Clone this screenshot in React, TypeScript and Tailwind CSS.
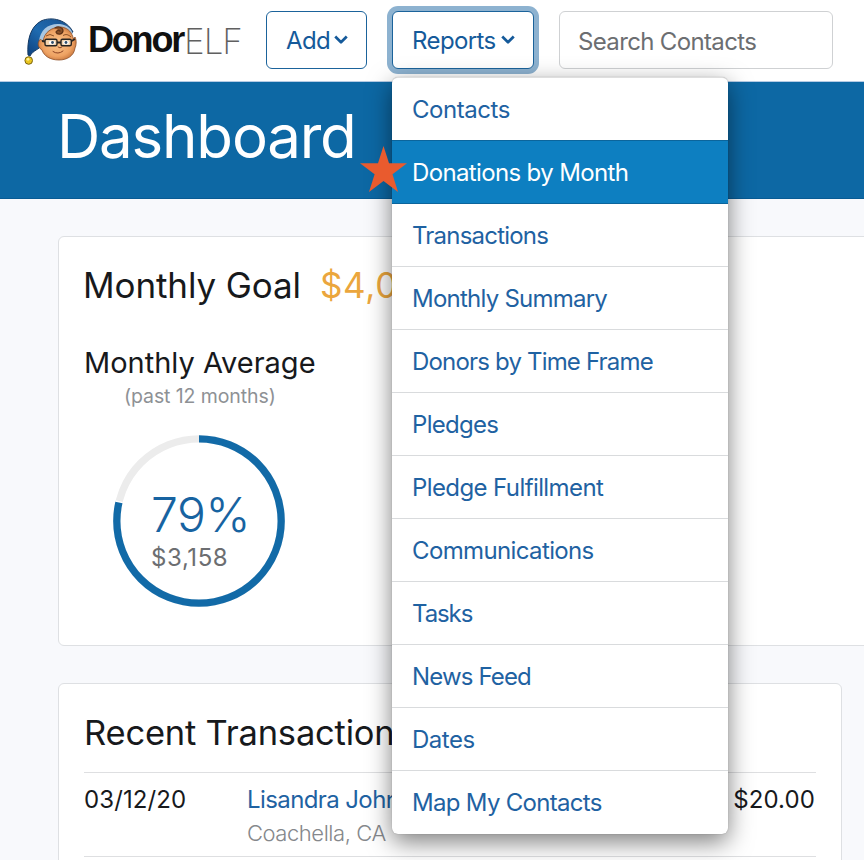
import type { ReactNode } from "react";

type MenuItem = { label: string; tracking: string; active?: boolean };

const reportItems: MenuItem[] = [
  { label: "Contacts", tracking: "tracking-[-0.45px]" },
  { label: "Donations by Month", tracking: "tracking-[-0.64px]", active: true },
  { label: "Transactions", tracking: "tracking-[-0.79px]" },
  { label: "Monthly Summary", tracking: "tracking-[-0.76px]" },
  { label: "Donors by Time Frame", tracking: "tracking-[-0.82px]" },
  { label: "Pledges", tracking: "tracking-[-0.7px]" },
  { label: "Pledge Fulfillment", tracking: "tracking-[-0.6px]" },
  { label: "Communications", tracking: "tracking-[-0.63px]" },
  { label: "Tasks", tracking: "tracking-[-1.1px]" },
  { label: "News Feed", tracking: "tracking-[-0.85px]" },
  { label: "Dates", tracking: "tracking-[-0.5px]" },
  { label: "Map My Contacts", tracking: "tracking-[-0.7px]" },
];

function ElfLogo() {
  return (
    <svg width="54" height="50" viewBox="0 0 54 50" className="shrink-0">
      <defs>
        <linearGradient id="hat" x1="0" y1="1" x2="1" y2="0">
          <stop offset="0" stopColor="#0d3f7c" />
          <stop offset="0.45" stopColor="#1f6bb0" />
          <stop offset="1" stopColor="#174f8d" />
        </linearGradient>
        <radialGradient id="face" cx="0.5" cy="0.5" r="0.6">
          <stop offset="0" stopColor="#fbc58c" />
          <stop offset="0.65" stopColor="#eea263" />
          <stop offset="1" stopColor="#b9662f" />
        </radialGradient>
      </defs>
      <path d="M4 38C3 24 6 10 17 4C28-1 43 3 49 15L37 20L19 27C15 33 9 33 6 39Z" fill="url(#hat)" stroke="#143963" strokeWidth="1" />
      <path d="M15 25C16 12 25 6 36 7C43 8 47 11 49 17L38 13L22 22Z" fill="#a9c6e0" />
      <path d="M15 24C16 21 18 23 19 25C20 15 28 10 37 10C45 11 48 16 49.5 22L51 20C53 24 52 29 51 31C50 39 43 43 35 43C26 43 20 39 18 33C15 31 13 28 15 24Z" fill="url(#face)" stroke="#8d4d25" strokeWidth="0.8" />
      <path d="M31 11C34 9 39 10 39 14C38 18 33 18 32 15C33 13 35 13 36 14" fill="#8a5128" stroke="#5d3218" strokeWidth="1.3" strokeLinecap="round" />
      <path d="M22 19Q26 16 30 19M39 18.5Q43 16 47 20" fill="none" stroke="#8a5128" strokeWidth="1" />
      <path d="M18 24L23 25M33 25.5H37M46 25L51 22" stroke="#292522" strokeWidth="1.8" />
      <rect x="21" y="22.3" width="12" height="6.4" rx="1.5" fill="#f2d3ae" stroke="#292522" strokeWidth="1.4" />
      <rect x="37" y="22.3" width="10.3" height="6.4" rx="1.5" fill="#f2d3ae" stroke="#292522" strokeWidth="1.4" />
      <ellipse cx="28" cy="25.5" rx="3" ry="2.1" fill="#fff" />
      <ellipse cx="42" cy="25.5" rx="2.8" ry="2.1" fill="#fff" />
      <circle cx="28.5" cy="25.5" r="1.4" fill="#314e69" />
      <circle cx="42" cy="25.5" r="1.4" fill="#314e69" />
      <path d="M34 30Q36 32 38 30M29 34.5Q34 38 39 34" fill="none" stroke="#8c4324" strokeWidth="1" strokeLinecap="round" />
      <circle cx="4.7" cy="43.5" r="3.8" fill="#e9c51f" stroke="#7b6410" strokeWidth="1" />
      <circle cx="4" cy="42.3" r="1.4" fill="#fff29a" />
    </svg>
  );
}

function Chevron() {
  return (
    <svg width="14" height="12" viewBox="0 0 14 12" className="-mt-[3px] shrink-0">
      <path d="M2.2 3.4L7 8.2L11.8 3.4" fill="none" stroke="currentColor" strokeWidth="2.7" strokeLinecap="square" strokeLinejoin="round" />
    </svg>
  );
}

function NavButton({ children, className }: { children: ReactNode; className: string }) {
  return (
    <button className={`flex h-[58px] items-center rounded-[6px] border border-[#1b639b] bg-white pl-[19px] pt-[2px] text-[24px] text-[#155a9a] ${className}`}>
      {children}
    </button>
  );
}

function ReportsMenu() {
  return (
    <ul className="absolute left-0 top-[66px] z-10 w-[336px] overflow-hidden rounded-[6px] border-t border-[#dedede] bg-white shadow-[0_0_1px_rgba(0,0,0,0.35),0_8px_24px_rgba(0,0,0,0.5)]">
      {reportItems.map((item) => (
        <li
          key={item.label}
          className={
            item.active
              ? "relative -mt-px flex h-16 items-center border-y border-[#0b659c] bg-[#0d7fc1] pl-5 pt-[2px] text-white"
              : "flex h-[63px] items-center border-b border-[#d9dbdd] pl-5 pt-[2px] text-[#1f62a2] last:border-b-0 last:pt-px"
          }
        >
          <a className={`whitespace-nowrap text-[24px] ${item.tracking}`}>{item.label}</a>
        </li>
      ))}
    </ul>
  );
}

function GoalRing() {
  const radius = 82.2;
  const length = 2 * Math.PI * radius;
  const filled = length * 0.785;
  return (
    <div className="relative ml-[30px] mt-[26px] h-[172px] w-[172px]">
      <svg width="172" height="172" viewBox="0 0 172 172" className="absolute inset-0">
        <g fill="none" strokeWidth="7.3" transform="rotate(-90 86 86)">
          <circle cx="86" cy="86" r={radius} stroke="#ececec" />
          <circle cx="86" cy="86" r={radius} stroke="#fff" strokeDasharray={`${filled + 1.5} ${length}`} />
          <circle cx="86" cy="86" r={radius} stroke="#126aa7" strokeDasharray={`${filled} ${length}`} />
        </g>
      </svg>
      <div className="relative pl-[38px] pt-[55px]">
        <div className="text-[48px] font-light leading-[50px] tracking-[-0.4px] text-[#1763a1]">79%</div>
        <div className="mt-[3px] text-[24px] leading-[30px] tracking-[0.6px] text-[#6c6e71]">$3,158</div>
      </div>
    </div>
  );
}

export default function App() {
  return (
    <div className="h-[860px] w-[864px] overflow-hidden bg-[#f8f9fc] font-['Inter','Liberation_Sans',sans-serif] text-[#17191c]">
      <header className="flex h-[82px] items-start border-b border-[#b5cbe4] bg-white pl-6">
        <div className="flex w-[242px] pt-[17px]">
          <ElfLogo />
          <div className="ml-[10px] mt-[2px] flex font-['Liberation_Sans',sans-serif] text-[36px] leading-[42px]">
            <span className="w-[96px] font-bold tracking-[-2.2px] text-[#101010]">Donor</span>
            <span className="pt-px font-['Inter',sans-serif] text-[35px] font-extralight tracking-[-1px] text-[#606060]">ELF</span>
          </div>
        </div>
        <NavButton className="mt-[11px] w-[101px] gap-[4px] tracking-[-0.6px]">Add<Chevron /></NavButton>
        <div className="relative ml-[25px] mt-[11px]">
          <NavButton className="w-[142px] gap-[5px] tracking-[-0.6px] shadow-[0_0_0_5px_#8db2d0]">Reports<Chevron /></NavButton>
          <ReportsMenu />
        </div>
        <input
          className="ml-[25px] mt-[11px] h-[58px] w-[274px] rounded-[6px] border border-[#cfd1d3] bg-white pl-[18px] pt-[2px] text-[24px] tracking-[-0.65px] text-[#6c6e71] placeholder:text-[#6c6e71]"
          placeholder="Search Contacts"
        />
      </header>

      <div className="relative h-[117px] border-b border-[#085b94] bg-[#0d68a4] pl-[57px] pt-[22px]">
        <h1 className="text-[60px] leading-[64px] tracking-[-1.2px] text-white">Dashboard</h1>
        <svg width="48" height="48" viewBox="0 0 48 48" className="absolute left-[360px] top-[63px] z-20">
          <path d="M23.5 1L29 18.3H47L32.5 29.2L38 47L23.5 36L9 47L14.6 29.2L0 18.3H18Z" fill="#e95b2e" />
        </svg>
      </div>

      <main className="pl-[58px] pt-[37px]">
        <section className="h-[410px] w-[830px] rounded-[6px] border border-[#dee0e3] bg-white pl-[24px] pt-[26px]">
          <div className="flex text-[35px] leading-[44px]">
            <h2 className="tracking-[-0.1px]">Monthly Goal</h2>
            <span className="ml-[19px] tracking-[0.7px] text-[#eba63d]">$4,000</span>
          </div>
          <h3 className="ml-px mt-[37px] text-[29px] leading-[38px]">Monthly Average</h3>
          <p className="ml-[41px] mt-px text-[19.5px] leading-[26px] tracking-[-0.1px] text-[#8e9195]">(past 12 months)</p>
          <GoalRing />
        </section>

        <section className="mt-[37px] h-[260px] w-[784px] rounded-[6px] border border-[#dee0e3] bg-white px-[25px] pt-[27px]">
          <h2 className="text-[34.5px] leading-[44px] tracking-[-0.2px]">Recent Transactions</h2>
          <div className="mt-[17px] flex h-[85px] border-y border-[#dedfe1] pt-[12px] text-[24px] leading-[30px]">
            <div className="w-[163px] tracking-[0.1px]">03/12/20</div>
            <div>
              <div className="tracking-[-0.6px] text-[#1f62a2]">Lisandra Johnson</div>
              <div className="mt-[4px] text-[22px] font-light leading-[28px] tracking-[-0.45px] text-[#85888c]">Coachella, CA</div>
            </div>
            <div className="ml-auto pr-px tracking-[0.1px]">$20.00</div>
          </div>
        </section>
      </main>
    </div>
  );
}
